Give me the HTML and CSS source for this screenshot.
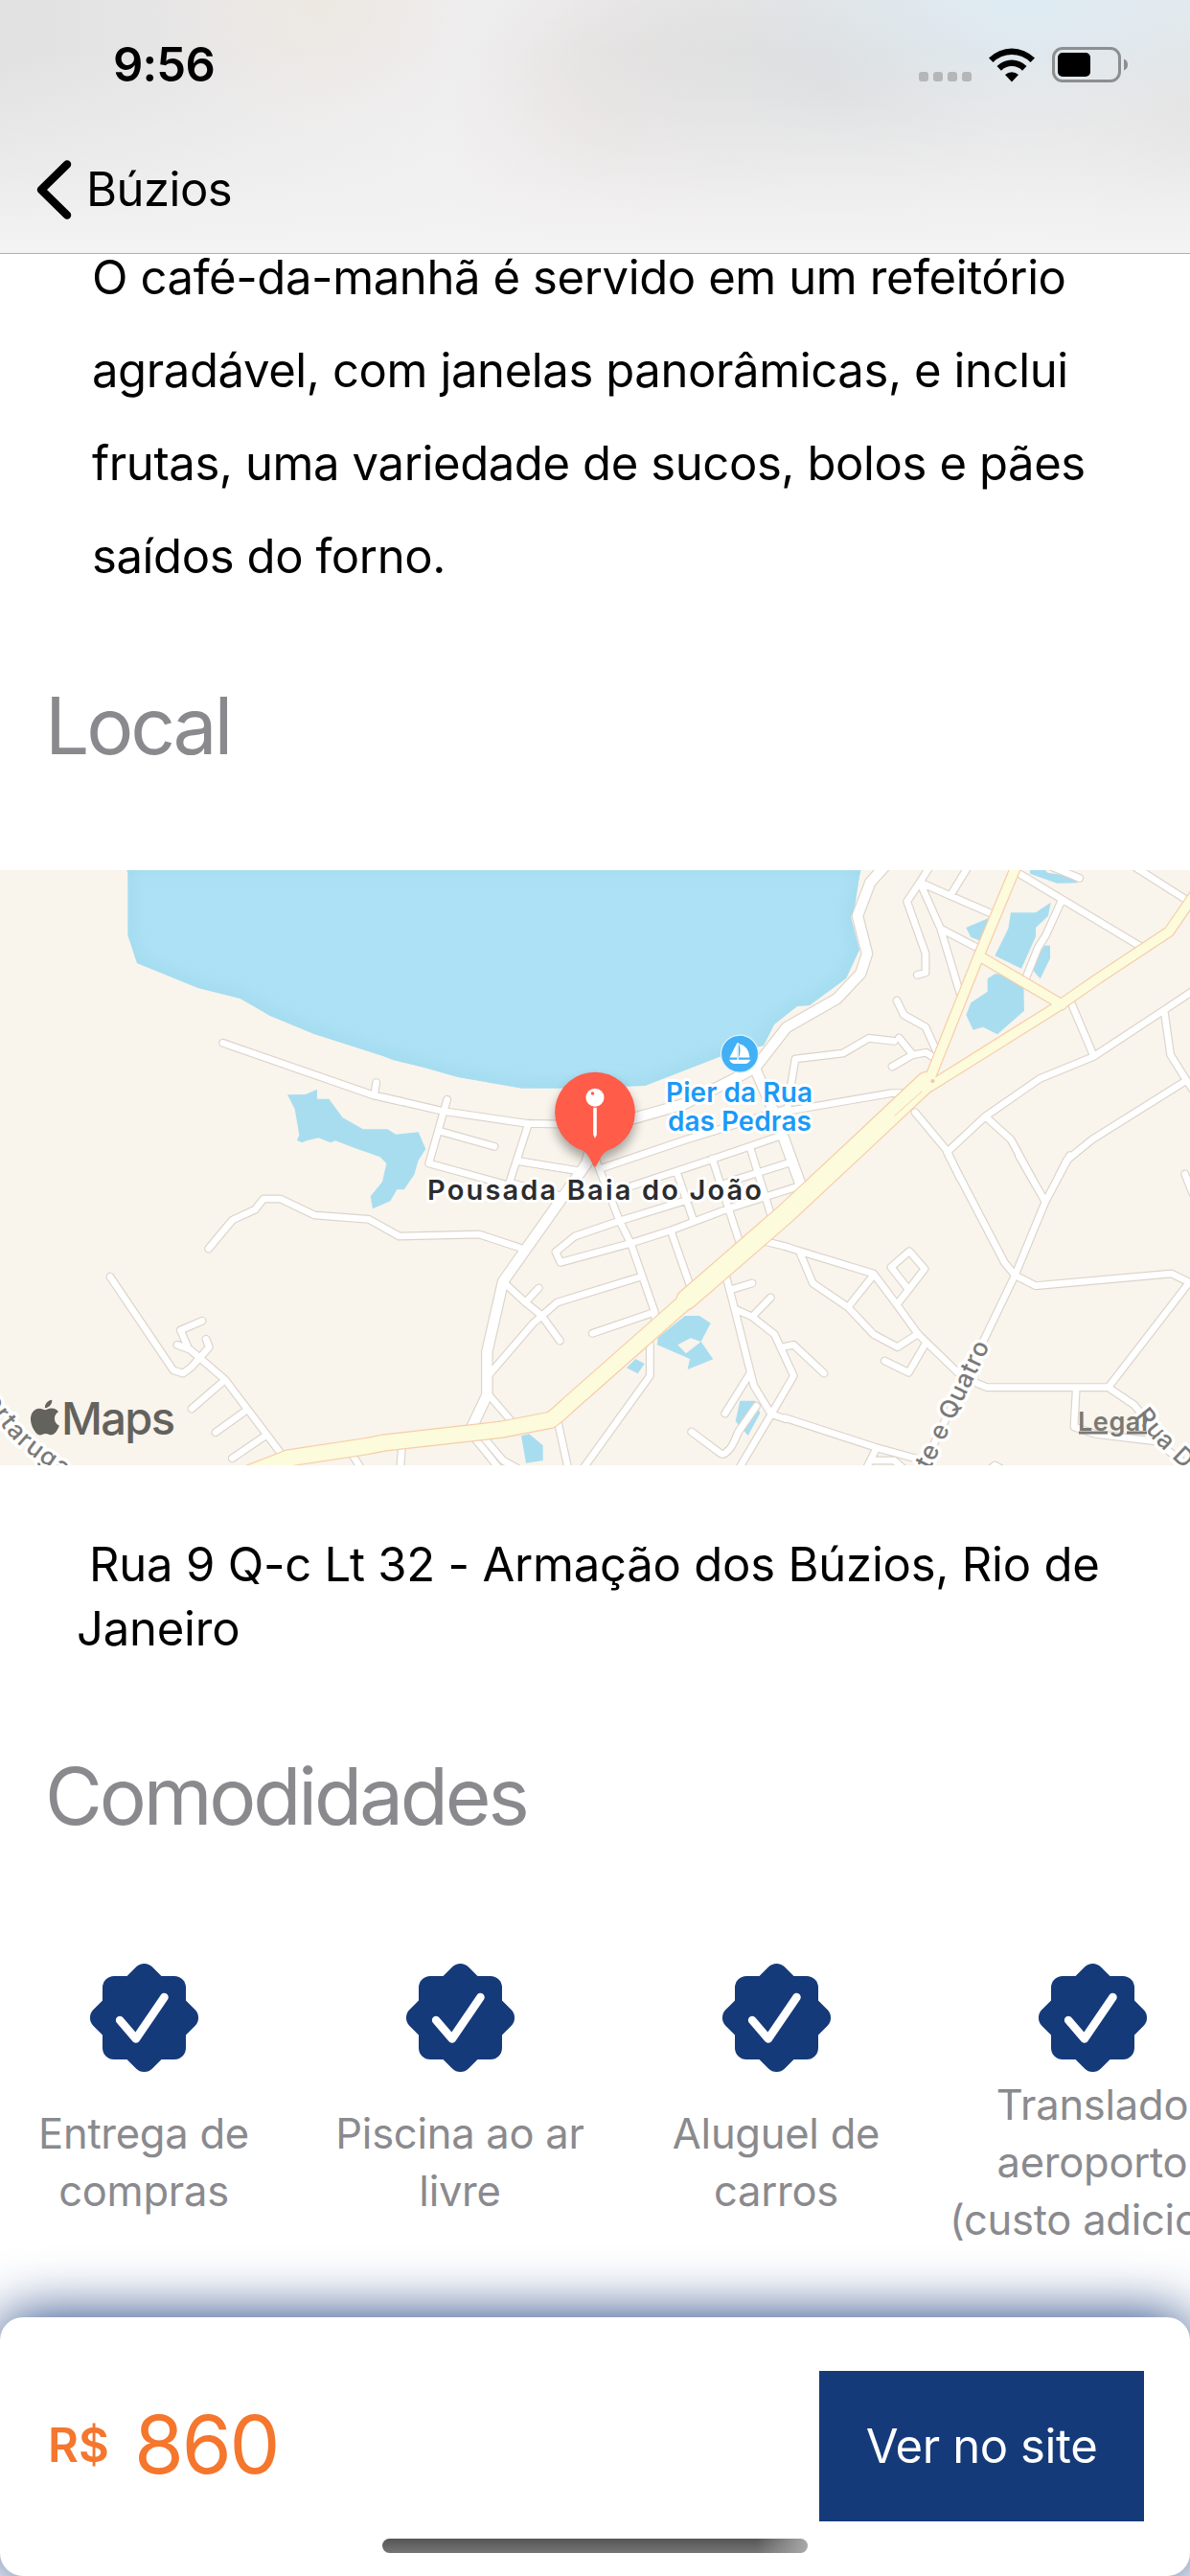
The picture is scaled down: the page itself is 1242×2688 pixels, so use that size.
FILE: index.html
```html
<!DOCTYPE html>
<html lang="pt-BR">
<head>
<meta charset="utf-8">
<title>Pousada Baia do João</title>
<link rel="stylesheet" href="styles.css">
</head>
<body>
<div class="screen">
  <header class="topbar">
    <div class="status">
      <span class="time">9:56</span>
      <div class="indicators">
        <div class="signal"><i></i><i></i><i></i><i></i></div>
        <svg class="wifi" width="48" height="37" viewBox="0 0 48 37">
          <path d="M0 11.5 A34 34 0 0 1 48 11.5 L43.5 16 A27.5 27.5 0 0 0 4.5 16Z"/>
          <path d="M8.5 20 A22 22 0 0 1 39.5 20 L35 24.7 A15.5 15.5 0 0 0 13 24.7Z"/>
          <path d="M17 29 A10 10 0 0 1 31 29 L24 36.5Z"/>
        </svg>
        <svg class="battery" width="80" height="37" viewBox="0 0 80 37">
          <rect x="1.5" y="1.5" width="69" height="34" rx="9.5" fill="none" stroke="#8c8e90" stroke-width="3"/>
          <rect x="6" y="6" width="34" height="25" rx="5"/>
          <path d="M75 12.5 Q79 14 79 18.5 Q79 23 75 24.500Z" fill="#8c8e90"/>
        </svg>
      </div>
    </div>
    <nav class="nav">
      <svg width="40" height="64" viewBox="0 0 40 64"><path d="M33 5.500 L6 32 L33 58.500" fill="none" stroke="#000" stroke-width="8.500" stroke-linecap="round" stroke-linejoin="round"/></svg>
      <span class="back">Búzios</span>
    </nav>
  </header>

  <p class="description">
    <span>O café-da-manhã é servido em um refeitório</span>
    <span>agradável, com janelas panorâmicas, e inclui</span>
    <span>frutas, uma variedade de sucos, bolos e pães</span>
    <span>saídos do forno.</span>
  </p>

  <h2 class="title title-place">Local</h2>

  <svg class="map" width="1242" height="621" viewBox="0 0 1242 621">
    <defs>
      <clipPath id="bay-clip"><use href="#bay"/></clipPath>
      <path id="bay" d="M131 -6 L133.500 4 V68 L143 97 L207 123 L251 134 L282 152 L328 171 L400 194 L410 198 L443 206 L478 216 L544 227.500 H587 L673 225 L753 194 L797 183 L808 161 L832 142 L845 141 L883 113 L890 98 L897 83 L888 49 L892 38 L897 6 L900 -6Z"/>
      <g id="streets">
        <g transform="translate(0 -19) scale(.33333)">
          <path d="M698 598 L1170 762 L1260 782 M1178 722 L1172 760"/>
        </g>
        <g transform="translate(400 -19) scale(.33333)">
          <path d="M0 768 L190 812 L450 850 L600 853 M200 775 L187 820 L143 975 L390 1043 M180 875 L348 922 M455 850 L395 1035 M425 968 L620 1000 M640 940 L625 1000 M690 988 L950 900 L1260 805 M1150 930 L1215 1140"/>
        </g>
        <g transform="translate(820 -19) scale(.33333)">
          <path d="M0 812 L330 755 L380 755 M420 95 L455 40 M420 95 L380 155 L438 318 V378 L412 385 M420 95 L660 200 M520 130 L575 40 M420 95 L485 240 L545 440 M485 240 L610 305 M735 70 L1110 295 M865 150 L815 260 L790 300 L752 395 M830 45 L920 82 M1090 45 L1255 150 M895 475 L965 640 M1290 425 L1185 495 L965 640 L795 710 L625 828 L505 940 M405 815 L505 935 L545 1020 M625 828 L705 900 L770 1020 M1185 495 L1205 635 L1255 715 L1290 765 M1255 715 L960 900 L880 965 L855 1015 M348 465 L370 510 L438 548 L475 630 M340 592 L260 583 L180 630 L30 648 L15 740 L5 812 M355 582 L398 635 L440 628 L470 648 M333 672 L398 635"/>
        </g>
        <g transform="translate(0 301) scale(.33333)">
          <path d="M345 370 L543 663 L573 672 L600 652 L655 590 L645 565 M633 508 L565 537 L588 590 M555 583 L595 598 L705 692 L885 930 M705 692 L600 783 M775 785 L675 857 M835 865 L727 938 M653 282 L728 192 L798 160 L825 126 H878 L985 177 L1155 190 L1250 243 L1500 237 L1640 283 M1105 930 L1140 985 M1258 905 L1252 985"/>
        </g>
        <g transform="translate(400 301) scale(.33333)">
          <path d="M425 8 L620 40 M395 75 L590 125 M660 -10 L740 195 L775 265 L850 480 L852 530 M780 85 L1030 2 L1240 -70 M1030 0 L1120 275 M920 45 L970 190 M540 292 L600 243 L740 195 L950 130 L1090 70 L1265 15 M540 292 L555 325 L775 265 L900 225 L1085 155 L1305 85 M900 225 L965 410 M335 672 L470 515 L545 450 L805 370 M655 547 L845 482 M375 385 L445 450 L495 490 L553 570 M445 450 L487 405 M335 745 L400 820 M290 880 L375 985 M320 880 L375 945 L430 975 M548 830 L582 985 M835 580 V680 L615 985 M1075 375 L1100 470 L1150 670 L1160 710 L1215 800 L1105 985 M1090 410 L1155 390 M1100 470 L1155 495 L1225 550 L1285 680 L1215 800 M1155 495 L1213 435 M1150 670 L1070 798 M965 855 L1052 920 Q1065 932 1078 915 Q1090 910 1112 855 L1168 775 M1215 800 L1260 815 M1190 258 L1260 275"/>
        </g>
        <g transform="translate(820 301) scale(.33333)">
          <path d="M0 812 L285 905 L430 945 M-10 590 L25 583 L120 672 M0 275 L45 290 L275 360 L350 460 L415 550 L555 685 L630 716 H1010 L1090 770 L1120 805 M45 295 L85 390 L195 465 L275 550 L350 590 L415 548 M195 465 L275 365 M350 455 L385 410 L330 340 L387 290 L435 345 L385 410 M440 575 L385 670 L310 633 M510 -10 L685 325 L718 365 L783 398 L1208 360 L1280 395 M730 -10 L813 135 L890 -10 M813 135 L718 365 L420 985 M1260 392 L1010 716 M910 716 L903 840 L970 862 L1160 885 L1270 970 M1250 48 L1275 110 M285 905 L245 985 M275 945 H340 L385 985 M625 985 L655 960 L700 985"/>
        </g>
      </g>
      <g id="avenues">
        <g transform="translate(400 -19) scale(.33333)">
          <path d="M770 838 L940 790 L1100 710 L1165 675 L1262 550 L1420 460 L1495 380 L1515 318 L1485 200 L1525 95 L1575 40 M1165 680 L1230 830 L1310 1050"/>
        </g>
        <g transform="translate(400 301) scale(.33333)">
          <path d="M640 10 L375 385 L325 605 V740 L275 845"/>
        </g>
      </g>
      <path id="highway-north" transform="translate(820 -19) scale(.33333)" d="M728 30 L605 325 L455 700 M605 325 L865 478 M1310 90 L1200 250 L980 395 L865 475 L450 735"/>
      <path id="highway-west" transform="translate(400 301) scale(.33333)" d="M1000 400 L575 775 Q550 800 525 818 L370 848 L0 890 L-50 900 L-300 938 L-420 985"/>
      <path id="highway-center" transform="translate(400 301) scale(.33333)" d="M1700 -240 L1500 -52 L1260 172 L950 441"/>
      <path id="turtle-road" d="M-16 553 C-6 571 8 590 22 602 S48 621 90 650"/>
      <path id="quatro-road" d="M970.500 626 L1034 494"/>
      <path id="dois-road" d="M1184 570 L1205 596 L1240 629 L1270 655"/>
      <filter id="soft" x="-10%" y="-10%" width="120%" height="120%"><feGaussianBlur stdDeviation="7"/></filter>
      <filter id="pin-shadow" x="-40%" y="-40%" width="180%" height="180%"><feGaussianBlur stdDeviation="6"/></filter>
    </defs>

    <rect width="1242" height="621" fill="#f9f4ec"/>
    <use href="#bay" fill="#ade1f5"/>
    <g clip-path="url(#bay-clip)"><use href="#bay" fill="none" stroke="#a3dbee" stroke-width="14" filter="url(#soft)"/></g>
    <g class="ponds">
      <path transform="translate(0 -19) scale(.33333)" d="M900 760 L957 759 L993 743 V773 H1030 L1073 832 L1137 868 H1213 L1240 884 L1310 877 L1333 930 L1310 965 L1297 1010 L1265 1057 H1243 L1222 1093 L1167 1117 L1160 1078 L1197 1033 L1210 975 L1190 955 L1105 925 L1050 904 L1035 910 L997 895 L962 903 L946 910 L930 903 L937 886 L923 805Z"/>
      <path transform="translate(820 -19) scale(.33333)" d="M705 190 H783 L830 158 L822 200 L783 237 V265 L738 365 L655 325 L697 240Z M810 293 H828 V333 L797 397 L770 365Z M565 237 L635 207 L610 278 L580 267Z M632 397 L655 382 L690 383 L745 415 L747 497 L663 571 L618 548 L587 557 L565 510 L580 472 L632 437Z M765 50 V68 L850 98 L915 97 L890 75 L820 65 L808 50Z"/>
      <path transform="translate(400 301) scale(.33333)" fill-rule="evenodd" d="M860 560 L945 492 H990 L1025 515 L995 573 L1033 628 L953 660 L960 627 L858 583Z M922 583 L962 562 L995 573 L948 610Z M790 627 L818 642 L797 673 L762 655Z M432 868 L457 862 L500 898 V945 L447 953Z M1117 758 H1165 L1180 797 L1142 867 L1103 822Z"/>
    </g>
    <g class="road">
      <use href="#streets" stroke="#dbd4ca" stroke-width="27"/>
      <use href="#avenues" stroke="#dbd4ca" stroke-width="38"/>
      <use href="#streets" stroke="#fff" stroke-width="20"/>
      <use href="#avenues" stroke="#fff" stroke-width="31"/>
      <g stroke="#f7cda6">
        <use href="#highway-north" stroke-width="36"/>
        <use href="#highway-west" stroke-width="55"/>
        <use href="#highway-center" stroke-width="67"/>
      </g>
      <g stroke="#fcfbdc">
        <use href="#highway-north" stroke-width="29"/>
        <use href="#highway-west" stroke-width="48"/>
        <use href="#highway-center" stroke-width="60"/>
      </g>
      <path stroke="#f7cda6" stroke-width="1" d="M962 231 L934 256"/>
      <circle cx="973.500" cy="220" r="2" fill="#f3c79c"/>
    </g>

    <g class="road-name">
      <text class="turtle"><textPath href="#turtle-road">ertaruga</textPath></text>
      <text><textPath href="#quatro-road" textLength="145">te e Quatro</textPath></text>
      <text><textPath href="#dois-road">Rua Dois</textPath></text>
    </g>

    <g fill="#63625c">
      <path transform="translate(28.600 552.700) scale(1.530)" d="M12.152 6.896c-.948 0-2.415-1.078-3.96-1.040-2.040.027-3.910 1.183-4.961 3.014-2.117 3.675-.546 9.103 1.519 12.090 1.013 1.454 2.208 3.090 3.792 3.039 1.520-.065 2.090-.987 3.935-.987 1.831 0 2.350.987 3.960.948 1.637-.026 2.676-1.480 3.676-2.948 1.156-1.688 1.636-3.325 1.662-3.415-.039-.013-3.182-1.221-3.220-4.857-.026-3.040 2.480-4.494 2.597-4.559-1.429-2.090-3.623-2.324-4.390-2.376-2-.156-3.675 1.090-4.610 1.090zM15.530 3.830c.843-1.012 1.400-2.427 1.245-3.830-1.207.052-2.662.805-3.532 1.818-.780.896-1.454 2.338-1.273 3.714 1.338.104 2.715-.688 3.559-1.701"/>
      <text class="brand" x="64" y="589" textLength="119">Maps</text>
    </g>
    <text class="legal" x="1125" y="584.500" textLength="73">Legal</text>
    <path d="M1126 587 H1156 M1176 587 H1197" stroke="#7a7975" stroke-width="3"/>

    <circle cx="772" cy="191.700" r="19.500" fill="#42b0f5" stroke="#e3f3fa" stroke-width="1.200"/>
    <g fill="#fff"><path d="M769.500 180 V195.500 H761.500 Q765.500 187.500 769.500 180Z M771 181 Q781.500 183.500 782.500 195.500 H771 Q774 188 771 181Z M761 197.800 H783.500 Q781 202 778 202 H766 Q763 202 761 197.800Z"/><path d="M769.400 180 H770.800 V198 H769.400Z"/></g>
    <g class="poi">
      <text x="695" y="242" textLength="153">Pier da Rua</text>
      <text x="697" y="272" textLength="150">das Pedras</text>
    </g>

    <path d="M621 210.700 A42 42 0 0 1 634 292.600 C627 296 624 308 621 310 C618 308 615 296 608 292.600 A42 42 0 0 1 621 210.700Z" fill="#000" opacity=".35" filter="url(#pin-shadow)" transform="translate(0 7)"/>
    <path d="M621 210.700 A42 42 0 0 1 634 292.600 C627 296 624 308 621 310 C618 308 615 296 608 292.600 A42 42 0 0 1 621 210.700Z" fill="#ff5c49"/>
    <circle cx="621" cy="237.300" r="9.500" fill="#fff"/>
    <circle cx="618.500" cy="233" r="1.800" fill="#ff5c49"/>
    <path d="M619.200 247.800 H622.800 V276 L621 280 L619.200 276Z" fill="#fff"/>
    <text class="place-name" x="446" y="343.500" textLength="349">Pousada Baia do João</text>
  </svg>

  <p class="address"><span class="first">Rua 9 Q-c Lt 32 - Armação dos Búzios, Rio de</span><span>Janeiro</span></p>

  <h2 class="title title-amenities">Comodidades</h2>

  <svg width="0" height="0" class="sprite">
    <symbol id="badge" viewBox="-57.500 -57.500 115 115">
      <g fill="#153a7a"><rect x="-43.500" y="-43.500" width="87" height="87" rx="12"/><rect x="-43.500" y="-43.500" width="87" height="87" rx="12" transform="rotate(45)"/></g>
      <path d="M-25.400 2.500 L-8.700 22 L21 -21.500" fill="none" stroke="#fff" stroke-width="8.500" stroke-linecap="round" stroke-linejoin="round"/>
    </symbol>
  </svg>
  <ul class="amenities">
    <li><svg width="115" height="115"><use href="#badge"/></svg><div class="caption">Entrega de<br>compras</div></li>
    <li><svg width="115" height="115"><use href="#badge"/></svg><div class="caption">Piscina ao ar<br>livre</div></li>
    <li><svg width="115" height="115"><use href="#badge"/></svg><div class="caption">Aluguel de<br>carros</div></li>
    <li><svg width="115" height="115"><use href="#badge"/></svg><div class="caption">Translado<br>aeroporto<br>(custo adicio…</div></li>
  </ul>

  <footer class="booking">
    <div class="price"><span class="currency">R$</span><span class="amount">860</span></div>
    <button class="visit">Ver no site</button>
    <div class="home-indicator"></div>
  </footer>
</div>
</body>
</html>
```

FILE: styles.css
```css
* { box-sizing: border-box; margin: 0; padding: 0; }

body {
  font-family: Inter, "Liberation Sans", sans-serif;
  background: #fff;
  color: #000;
}

.screen {
  display: flex;
  flex-direction: column;
  width: 1242px;
  height: 2688px;
  overflow: hidden;
}

.screen > * { flex-shrink: 0; }

.topbar {
  height: 265px;
  border-bottom: 1px solid #b2b1b2;
  background:
    linear-gradient(to bottom, rgba(244, 243, 244, 0) 20%, rgba(244, 243, 244, 0.55) 68%, #f4f3f4 98%),
    radial-gradient(ellipse 300px 130px at 1075px 0, #deebf3, rgba(222, 235, 243, 0)),
    radial-gradient(ellipse 330px 190px at 870px 95px, #dadcdd, rgba(220, 221, 221, 0)),
    radial-gradient(ellipse 200px 170px at 1242px 150px, #dededd, rgba(225, 225, 224, 0)),
    radial-gradient(ellipse 190px 190px at 650px 150px, #e5dfdd, rgba(232, 227, 225, 0)),
    radial-gradient(ellipse 170px 150px at 330px 0, #ede8e2, rgba(237, 232, 226, 0)),
    linear-gradient(to right, #e2e1e1, #efeeef 38%, #eae9e9 60%, #e8eaec);
}

.status {
  display: flex;
  justify-content: space-between;
  align-items: flex-start;
  height: 160px;
  padding: 36px 64px 0 118px;
}

.time {
  font-size: 49px;
  font-weight: 600;
  line-height: 64px;
  letter-spacing: -0.8px;
}

.indicators { display: flex; align-items: flex-start; padding-top: 13px; }
.signal { display: flex; gap: 5px; width: 55px; margin-right: 18px; padding-top: 26px; }
.signal i { width: 10px; height: 10px; border-radius: 3px; background: #b5b6b7; }
.wifi { margin-right: 18px; }

.nav { display: flex; align-items: center; gap: 13px; height: 76px; padding-left: 37px; }
.back { font-size: 49px; line-height: 62px; letter-spacing: -0.5px; }

.description {
  margin: -24px 0 0 96px;
  font-size: 49px;
  line-height: 97px;
  letter-spacing: -0.39px;
}
.description span, .address span { display: block; white-space: nowrap; }

.title {
  padding-left: 47px;
  color: #8a8a8e;
  font-size: 82px;
  font-weight: 400;
  line-height: 100px;
  letter-spacing: -3.2px;
}
.title-place { margin-top: 79px; }
.title-amenities { margin-top: 92px; }

.map { display: block; margin-top: 100px; }
.ponds { fill: #a8ddf0; }
.road { fill: none; stroke-linecap: round; stroke-linejoin: round; }
.road-name text {
  font-size: 26px;
  font-weight: 500;
  fill: #7b7a78;
  stroke: #fff;
  stroke-width: 7px;
  stroke-linejoin: round;
  paint-order: stroke;
  letter-spacing: 0.8px;
}
.road-name .turtle { letter-spacing: 1.5px; }
.brand { font-size: 47px; font-weight: 500; }
.legal { font-size: 27px; font-weight: 600; fill: #7a7975; }
.poi text, .place-name {
  font-size: 28px;
  font-weight: 600;
  fill: #1b9af7;
  stroke: #fff;
  stroke-width: 6px;
  stroke-linejoin: round;
  paint-order: stroke;
}
.place-name { font-size: 29px; fill: #2c2c2e; }

.address {
  margin: 70px 0 0 80px;
  font-size: 49px;
  line-height: 67px;
  letter-spacing: -0.22px;
}
.address .first { padding-left: 13px; }

.sprite { position: absolute; }

.amenities { display: flex; gap: 30px; margin-top: 123px; list-style: none; }
.amenities li {
  display: flex;
  flex: 0 0 300px;
  flex-direction: column;
  align-items: center;
  min-width: 0;
}
.caption {
  display: grid;
  align-content: center;
  height: 180px;
  margin-top: 3px;
  color: #8a8a8e;
  font-size: 43.500px;
  line-height: 60px;
  text-align: center;
  white-space: nowrap;
  letter-spacing: -0.25px;
}

.booking {
  position: relative;
  display: flex;
  justify-content: space-between;
  align-items: flex-start;
  height: 270px;
  margin-top: auto;
  padding: 56px 48px 0 50px;
  border-radius: 24px;
  background: #fff;
  box-shadow: 0 0 62px #153a7a;
}
.price { display: flex; align-items: flex-start; padding-top: 27px; color: #f5762d; line-height: 100px; }
.currency { width: 90px; padding-top: 1px; font-size: 49px; font-weight: 600; }
.amount { font-size: 84px; letter-spacing: -2.3px; }
.visit {
  width: 339px;
  height: 157px;
  border: 0;
  background: #153a7a;
  color: #fff;
  font: 400 49px/60px Inter, "Liberation Sans", sans-serif;
  letter-spacing: -0.4px;
}
.home-indicator {
  position: absolute;
  left: 399px;
  bottom: 24px;
  width: 444px;
  height: 15px;
  border-radius: 8px;
  background:
    linear-gradient(to right, rgba(170, 170, 170, 0) 88%, #a8a8a8),
    linear-gradient(#545655, #757575);
}
```
